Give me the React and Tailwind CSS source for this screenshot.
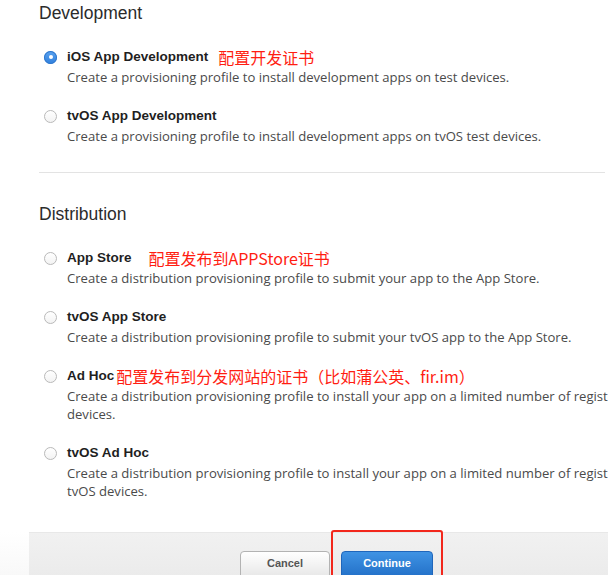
import React from "react";

const sans = { fontFamily: '"Liberation Sans", Arial, sans-serif' };
const desc = { fontFamily: '"Open Sans", "Liberation Sans", sans-serif' };
const cjk = { fontFamily: '"Noto Sans CJK SC", "Liberation Sans", sans-serif' };

function Radio({ checked }) {
  if (checked) {
    return (
      <span className="flex h-[13px] w-[13px] shrink-0 items-center justify-center rounded-full bg-gradient-to-b from-[#5aa3f0] to-[#2f7fdc] shadow-[inset_0_0_0_1px_#2f77cc]">
        <span className="h-[4px] w-[4px] rounded-full bg-white" />
      </span>
    );
  }
  return (
    <span className="h-[13px] w-[13px] shrink-0 rounded-full border border-[#b9b9b9] bg-gradient-to-b from-white to-[#f3f3f3]" />
  );
}

function Option({ checked, title, note, noteGap = "ml-[10px]", lines }) {
  return (
    <div className="flex items-start">
      <div className="ml-[5px] flex h-[22px] items-center">
        <Radio checked={checked} />
      </div>
      <div className="ml-[10px]">
        <div className="flex h-[22px] items-center">
          <span className="text-[13.5px] font-bold text-[#1f1f1f]">{title}</span>
          {note && (
            <span className={`${noteGap} text-[16px] text-[#ff1d12]`} style={cjk}>
              {note}
            </span>
          )}
        </div>
        <div className="whitespace-nowrap text-[13.1px] leading-[18px] text-[#4a4a4a]" style={desc}>
          {lines.map((l, i) => (
            <div key={i}>{l}</div>
          ))}
        </div>
      </div>
    </div>
  );
}

export default function App() {
  return (
    <div className="relative h-[575px] w-[608px] overflow-hidden bg-white" style={sans}>
      <div className="pl-[39px]">
        <h2 className="mt-[1px] text-[17.5px] leading-[24px] text-[#2b2b2b]">Development</h2>
        <div className="mt-[21px] flex flex-col gap-[19px]">
          <Option
            checked
            title="iOS App Development"
            note="配置开发证书"
            lines={["Create a provisioning profile to install development apps on test devices."]}
          />
          <Option
            title="tvOS App Development"
            lines={["Create a provisioning profile to install development apps on tvOS test devices."]}
          />
        </div>
        <div className="mt-[27px] mr-[3px] border-t border-[#e3e3e3]" />
        <h2 className="mt-[29px] text-[17.5px] leading-[24px] text-[#2b2b2b]">Distribution</h2>
        <div className="mt-[21px] flex flex-col gap-[19px]">
          <Option
            title="App Store"
            note="配置发布到APPStore证书"
            noteGap="ml-[17px]"
            lines={["Create a distribution provisioning profile to submit your app to the App Store."]}
          />
          <Option
            title="tvOS App Store"
            lines={["Create a distribution provisioning profile to submit your tvOS app to the App Store."]}
          />
          <Option
            title="Ad Hoc"
            note="配置发布到分发网站的证书（比如蒲公英、fir.im）"
            noteGap="ml-[2px]"
            lines={[
              "Create a distribution provisioning profile to install your app on a limited number of registered",
              "devices.",
            ]}
          />
          <Option
            title="tvOS Ad Hoc"
            lines={[
              "Create a distribution provisioning profile to install your app on a limited number of registered",
              "tvOS devices.",
            ]}
          />
        </div>
      </div>

      <div className="mt-[32px] flex">
        <div className="h-[60px] w-[29px] bg-gradient-to-b from-white to-[#f6f6f6]" />
        <div className="relative h-[60px] flex-1 border-t border-[#e8e8e8] bg-gradient-to-b from-[#f1f1f1] to-[#e9e9e9]">
          <div className="flex gap-[11px] pl-[211px] pt-[18px]">
            <button className="h-[30px] w-[90px] rounded-[4px] border border-[#b3b3b3] bg-gradient-to-b from-white to-[#e4e4e4] text-[11px] font-bold text-[#555]">
              <span className="relative top-[-3px]">Cancel</span>
            </button>
            <button className="h-[30px] w-[92px] rounded-[4px] border border-[#1f66bb] bg-gradient-to-b from-[#3f93e4] to-[#1f6cc4] text-[11px] font-bold text-white">
              <span className="relative top-[-3px]">Continue</span>
            </button>
          </div>
          <div className="absolute left-[302px] top-[-3px] h-[60px] w-[112px] rounded-[3px] border-2 border-[#f2271c]" />
        </div>
      </div>
    </div>
  );
}
